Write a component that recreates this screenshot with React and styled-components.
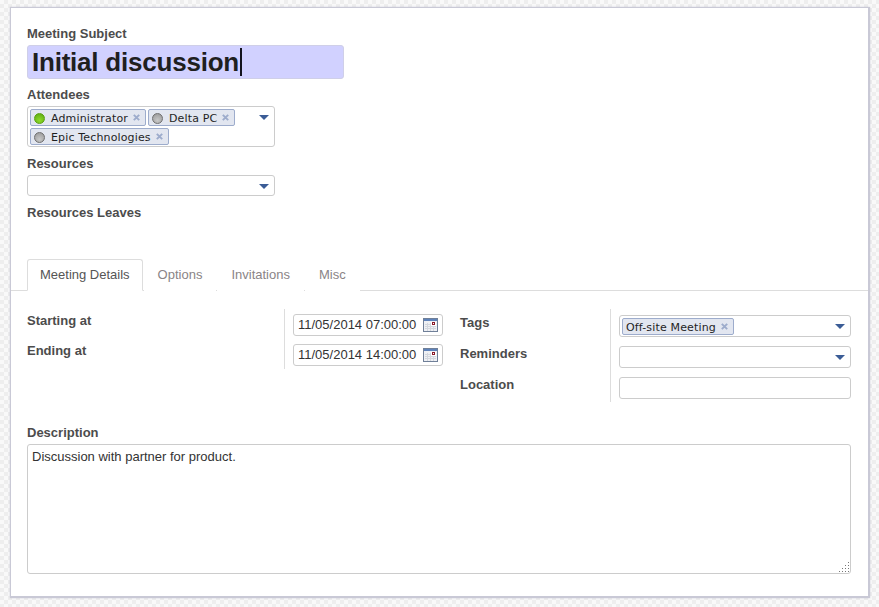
import React from "react";
import styled, { createGlobalStyle } from "styled-components";

const Global = createGlobalStyle`
  html, body { margin: 0; padding: 0; height: 100%; }
  body {
    width: 879px; height: 607px; overflow: hidden;
    font-family: "Liberation Sans", Arial, sans-serif;
    font-size: 13px; color: #4c4c4c;
    background: repeating-conic-gradient(#eeeeee 0 25%, #f9f9f9 0 50%) 0 0 / 8px 8px;
  }
  * { box-sizing: border-box; }
`;

const Page = styled.div`
  padding: 7px 9px 9px 10px;
  height: 607px;
`;
const Sheet = styled.div`
  height: 591px;
  background: #fff;
  border: 1px solid #c9c9d6;
  border-bottom-width: 2px;
  border-right-width: 2px;
  box-shadow: 0 0 2px rgba(60, 60, 110, 0.2);
  display: flex;
  flex-direction: column;
`;
const Head = styled.div`
  padding: 18px 16px 0;
  display: flex;
  flex-direction: column;
  align-items: flex-start;
`;
const Label = styled.label`
  display: block;
  font-weight: bold;
  font-size: 13px;
  line-height: 15px;
  color: #4c4c4c;
`;
const Title = styled.div`
  width: 317px;
  height: 34px;
  margin: 4px 0 8px;
  padding: 0 4px;
  background: #d1d1ff;
  border: 1px solid #cfcfe8;
  border-radius: 3px;
  font-size: 26px;
  font-weight: bold;
  letter-spacing: -0.22px;
  line-height: 32px;
  color: #1f1f1f;
  display: flex;
  align-items: center;
`;
const Caret = styled.span`
  display: inline-block;
  width: 2px;
  height: 28px;
  margin-left: 1px;
  background: #14141e;
`;
const Box = styled.div`
  position: relative;
  width: ${(p) => p.$w}px;
  min-height: 21px;
  background: #fff;
  border: 1px solid #cccccc;
  border-radius: 3px;
`;
const M2M = styled(Box)`
  margin: 4px 0 9px;
  padding: 2px 30px 1px 2px;
  display: flex;
  flex-wrap: wrap;
  gap: 2px;
`;
const Arrow = styled.span`
  position: absolute;
  right: 5px;
  top: 8px;
  width: 0;
  height: 0;
  border-left: 5px solid transparent;
  border-right: 5px solid transparent;
  border-top: 5px solid #3b5c96;
`;
const Tag = styled.span`
  display: inline-flex;
  align-items: center;
  height: 17px;
  padding: 1px 5px 0 3px;
  background: #e2e6f0;
  border: 1px solid #9daccc;
  border-radius: 2px;
  font-family: "DejaVu Sans", sans-serif;
  font-size: 11px;
  letter-spacing: 0.15px;
  color: #1f1f1f;
  white-space: nowrap;
`;
const Dot = styled.span`
  width: 11px;
  height: 11px;
  margin-right: 6px;
  border-radius: 50%;
  border: 1px solid ${(p) => (p.$on ? "#5aa00f" : "#6f6f6f")};
  background: ${(p) => (p.$on ? "radial-gradient(circle at 50% 70%, #8fdc2a, #5aa812)" : "radial-gradient(circle at 50% 70%, #c8c8c8, #969696)")};
`;
const RemoveSvg = styled.svg`
  margin-left: 5px;
  margin-top: -2px;
  flex: none;
`;
const Select = styled(Box)`
  height: 21px;
  margin: 4px 0 9px;
`;
const Leaves = styled(Label)`
  margin-bottom: 39px;
`;
const Tabs = styled.div`
  display: flex;
  height: 32px;
  padding-left: 16px;
  border-bottom: 1px solid #dddddd;
`;
const TabItem = styled.div`
  height: 32px;
  padding: 0 ${(p) => (p.$active ? 12 : 13)}px;
  margin-right: 1px;
  line-height: 30px;
  font-size: 13px;
  color: ${(p) => (p.$active ? "#555" : "#8a8486")};
  background: #fff;
  border: 1px solid ${(p) => (p.$active ? "#dddddd" : "transparent")};
  border-bottom-color: ${(p) => (p.$active ? "#fff" : "transparent")};
  border-radius: 3px 3px 0 0;
`;
const Details = styled.div`
  display: grid;
  grid-template-columns: 258px 175px 151px 1fr;
  padding: 18px 17px 0 16px;
  height: 134px;
`;
const LabelCol = styled.div`
  height: ${(p) => p.$h}px;
  border-right: 1px solid #dddddd;
  display: flex;
  flex-direction: column;
  gap: ${(p) => p.$gap}px;
  padding-top: ${(p) => p.$top}px;
`;
const FieldCol = styled.div`
  height: ${(p) => p.$h}px;
  padding-left: 8px;
  padding-top: ${(p) => p.$top}px;
  display: flex;
  flex-direction: column;
  gap: ${(p) => p.$gap}px;
`;
const DateInput = styled.div`
  position: relative;
  width: 150px;
  height: 22px;
  padding-left: 4px;
  border: 1px solid #cccccc;
  border-radius: 3px;
  color: #333;
  font-size: 13px;
  line-height: 20px;
  white-space: nowrap;
`;
const CalSvg = styled.svg`
  position: absolute;
  right: 4px;
  top: 3px;
`;
const Wide = styled(Box)`
  width: 232px;
  height: 22px;
`;
const TagWide = styled(Wide)`
  padding: 2px;
`;
const Desc = styled.div`
  padding: 0 17px 0 16px;
`;
const TextArea = styled.div`
  position: relative;
  height: 130px;
  margin-top: 4px;
  padding: 4px;
  border: 1px solid #cccccc;
  border-radius: 3px;
  line-height: 15px;
  color: #333;
`;
const Grip = styled.svg`
  position: absolute;
  right: -1px;
  bottom: -1px;
`;

const Cal = () => (
  <CalSvg width="15" height="14" viewBox="0 0 15 14">
    <rect x="0.5" y="0.5" width="14" height="13" fill="#eef0f4" stroke="#6f7f98" />
    <rect x="1" y="1" width="13" height="2" fill="#5e82ba" />
    <path d="M2 6.5h7M2 8.5h11M2 10.5h11M4.5 5v8M7.5 5v8M10.5 9v4" stroke="#d3d7de" />
    <rect x="8" y="4" width="5" height="4" fill="#fff" />
    <rect x="9.5" y="4.5" width="2" height="2" fill="#fff" stroke="#8a1a2a" />
  </CalSvg>
);

const Remove = () => (
  <RemoveSvg width="7" height="7" viewBox="0 0 7 7">
    <path d="M0.8 0.8L6.2 6.2M6.2 0.8L0.8 6.2" stroke="#9daccc" strokeWidth="1.9" />
  </RemoveSvg>
);

const Person = ({ on, children }) => (
  <Tag>
    <Dot $on={on} />
    {children}
    <Remove />
  </Tag>
);

export default function App() {
  return (
    <Page>
      <Global />
      <Sheet>
        <Head>
          <Label>Meeting Subject</Label>
          <Title>Initial discussion<Caret /></Title>
          <Label>Attendees</Label>
          <M2M $w={248}>
            <Person on>Administrator</Person>
            <Person>Delta PC</Person>
            <Person>Epic Technologies</Person>
            <Arrow />
          </M2M>
          <Label>Resources</Label>
          <Select $w={248}><Arrow /></Select>
          <Leaves>Resources Leaves</Leaves>
        </Head>
        <Tabs>
          <TabItem $active>Meeting Details</TabItem>
          <TabItem>Options</TabItem>
          <TabItem>Invitations</TabItem>
          <TabItem>Misc</TabItem>
        </Tabs>
        <Details>
          <LabelCol $h={60} $gap={15} $top={4}>
            <Label>Starting at</Label>
            <Label>Ending at</Label>
          </LabelCol>
          <FieldCol $h={60} $gap={8} $top={5}>
            <DateInput>11/05/2014 07:00:00<Cal /></DateInput>
            <DateInput>11/05/2014 14:00:00<Cal /></DateInput>
          </FieldCol>
          <LabelCol $h={93} $gap={16} $top={6}>
            <Label>Tags</Label>
            <Label>Reminders</Label>
            <Label>Location</Label>
          </LabelCol>
          <FieldCol $h={93} $gap={9} $top={6}>
            <TagWide>
              <Tag>Off-site Meeting<Remove /></Tag>
              <Arrow />
            </TagWide>
            <Wide><Arrow /></Wide>
            <Wide />
          </FieldCol>
        </Details>
        <Desc>
          <Label>Description</Label>
          <TextArea>
            Discussion with partner for product.
            <Grip width="13" height="13" viewBox="0 0 13 13" fill="#777">
              <rect x="10" y="1" width="1" height="1" />
              <rect x="7" y="4" width="1" height="1" />
              <rect x="10" y="4" width="1" height="1" />
              <rect x="4" y="7" width="1" height="1" />
              <rect x="7" y="7" width="1" height="1" />
              <rect x="10" y="7" width="1" height="1" />
              <rect x="1" y="10" width="1" height="1" />
              <rect x="4" y="10" width="1" height="1" />
              <rect x="7" y="10" width="1" height="1" />
              <rect x="10" y="10" width="1" height="1" />
            </Grip>
          </TextArea>
        </Desc>
      </Sheet>
    </Page>
  );
}
